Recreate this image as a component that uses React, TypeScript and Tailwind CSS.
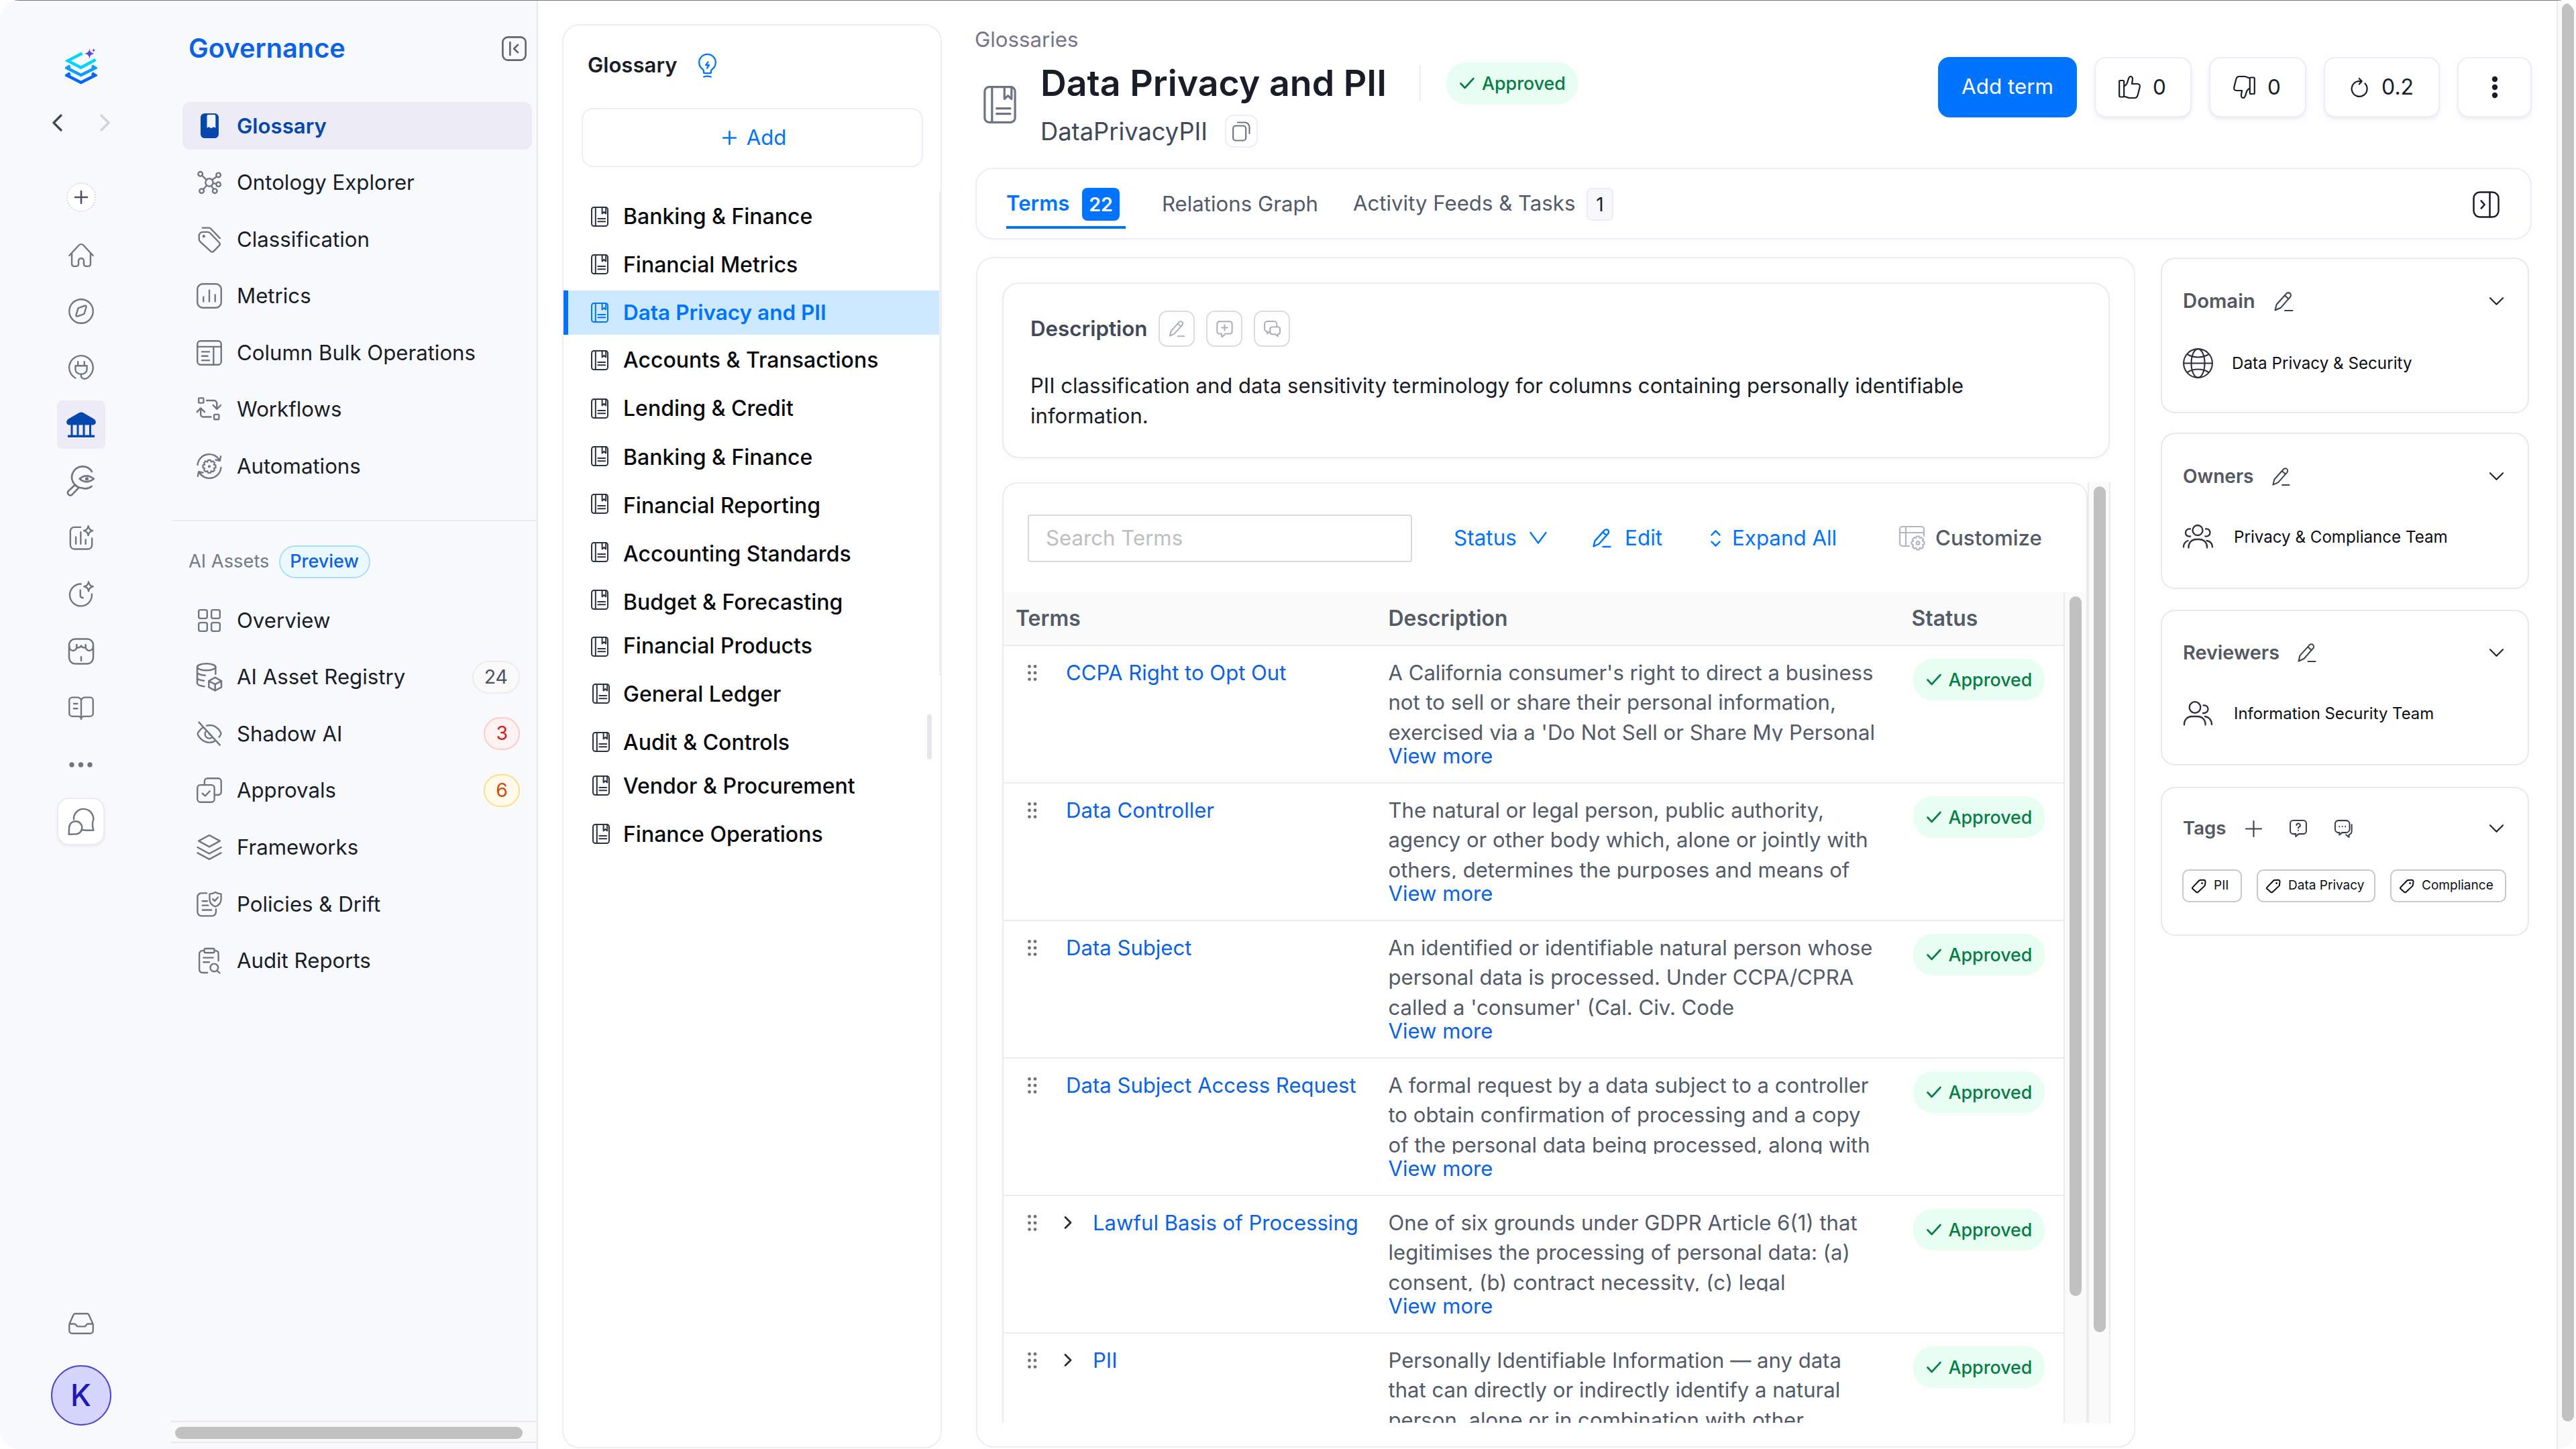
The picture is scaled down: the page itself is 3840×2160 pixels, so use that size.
import React from "react";

type IconProps = { className?: string; sw?: number; box?: string; children: React.ReactNode };

const Svg = ({ className = "size-[38px]", sw = 1.5, box = "0 0 24 24", children }: IconProps) => (
  <svg
    className={`shrink-0 overflow-visible ${className}`}
    viewBox={box}
    fill="none"
    stroke="currentColor"
    strokeWidth={sw}
    strokeLinecap="round"
    strokeLinejoin="round"
  >
    {children}
  </svg>
);

const Logo = () => (
  <svg className="h-[54px] w-[48px] shrink-0" viewBox="0 0 48 54" fill="none">
    <path d="M25.5 7.5L4 18.6L23.7 28.8L45.5 17" stroke="#00d5ff" strokeWidth="4.4" />
    <path d="M7.5 26.3L2.6 29.3L23.7 40L45 29.3L40 26.3" stroke="#0a9dff" strokeWidth="4.6" />
    <path d="M7.5 37.3L2.6 40.3L23.7 51L45 40.3L40 37.3" stroke="#0068ff" strokeWidth="4.6" />
    <path d="M36.4 .6C37.4 5.4 38.6 6.8 43.4 7.9C38.6 9 37.4 10.4 36.4 15.2C35.4 10.4 34.2 9 29.4 7.9C34.2 6.8 35.4 5.4 36.4 .6Z" fill="#5b47e0" />
    <path d="M42.6 0C43 2 43.6 2.6 45.6 3C43.6 3.4 43 4 42.6 6C42.2 4 41.6 3.4 39.6 3C41.6 2.6 42.2 2 42.6 0Z" fill="#8b3df0" />
  </svg>
);

const Book = ({ className = "h-[30px] w-[26px]", sw = 2 }: { className?: string; sw?: number }) => (
  <Svg className={className} sw={sw} box="0 0 26 30">
    <rect x="1" y="1" width="24" height="28" rx="3.5" />
    <path d="M6.8 1v28M16.6 1v9.5l2.8-2.6l2.8 2.6V1M10.4 18h10.8M10.4 22.2h10.8" />
  </Svg>
);

const Pencil = ({ className = "size-[28px]", sw = 2 }: { className?: string; sw?: number }) => (
  <Svg className={className} sw={sw} box="0 0 28 28">
    <path d="M1.5 26.5L3.4 18.4L17.6 2.6a3.4 3.4 0 0 1 5.6 4.8L9.4 23Z M15.4 5.4l5.2 4.7M15.5 27h11" />
  </Svg>
);

const Check = () => (
  <Svg className="h-[18px] w-[22px]" sw={2.6} box="0 0 22 18">
    <path d="M1.5 9.5L7.6 16L20.5 2" />
  </Svg>
);

const Chevron = ({ className = "h-[12px] w-[22px]" }: { className?: string }) => (
  <Svg className={className} sw={2.2} box="0 0 22 12">
    <path d="M1 1L11 11L21 1" />
  </Svg>
);

const Dots = ({ className = "h-[24px] w-[14px]" }: { className?: string }) => (
  <svg className={`shrink-0 ${className}`} viewBox="0 0 14 24" fill="currentColor">
    {[2.4, 12, 21.6].map((y) => (
      <g key={y}>
        <circle cx="2.5" cy={y} r="2.4" />
        <circle cx="11" cy={y} r="2.4" />
      </g>
    ))}
  </svg>
);

const Tag = ({ className = "size-[22px]" }: { className?: string }) => (
  <Svg className={className} sw={2} box="0 0 22 22">
    <path d="M1.6 12.6L10.8 3a3 3 0 0 1 2-.9L18 1.8a2.4 2.4 0 0 1 2.5 2.6L20 9a3 3 0 0 1-.9 1.9L9.6 19.8a1.8 1.8 0 0 1-2.6 0L1.6 15a1.7 1.7 0 0 1 0-2.4Z" />
    <circle cx="15.6" cy="6.6" r="1" fill="currentColor" strokeWidth="1" />
  </Svg>
);

/* ---------- navigation rail ---------- */

const RAIL: React.ReactNode[] = [
  <Svg key="home" className="mt-[3px] size-[38px]">
    <path d="M.8 12L9.9 2.2a3 3 0 0 1 4.2 0L23.2 12M3.2 9.8V20a2 2 0 0 0 2 2h2.3a2 2 0 0 0 2-2v-3a2.5 2.5 0 0 1 5 0v3a2 2 0 0 0 2 2h2.3a2 2 0 0 0 2-2V9.8" />
  </Svg>,
  <Svg key="compass">
    <circle cx="12" cy="12" r="11.2" />
    <path d="M10.2 8.6l5.5-1.9a.9.9 0 0 1 1.1 1.1l-1.7 5.8a2 2 0 0 1-1.3 1.3l-5.5 1.9a.9.9 0 0 1-1.1-1.1l1.7-5.8a2 2 0 0 1 1.3-1.3Z" />
  </Svg>,
  <Svg key="plug">
    <path d="M6.6 21.8A11.2 11.2 0 1 1 20.9 18.7c-1.8 2.4-4 4.2-6.4 3.8c-2-.3-2.6-1.4-2.6-3.2v-1.2M6.6 10.3h10.8v3.2a4.6 4.6 0 0 1-4.6 4.6h-1.6a4.6 4.6 0 0 1-4.6-4.6ZM9 10.2V6.4M15 10.2V6.4" />
  </Svg>,
  <svg key="bank" className="h-[38px] w-[44px]" viewBox="0 0 44 38" fill="currentColor">
    <path d="M18.5 1.4a7 7 0 0 1 7 0L41 10.5c2.4 1.6 3.4 4.4 2.6 6.2S41 19.6 39 19.6H5c-2 0-3.800-.9-4.600-2.900S.6 12.100 3 10.500Z" />
    <path d="M6.5 19h3v17h-3zM15.5 19h3v17h-3zM24.5 19h3v17h-3zM34 19h3v17h-3zM2 34.6h40V38H2z" />
  </svg>,
  <Svg key="inspect" className="h-[43px] w-[43px]" sw={1.5}>
    <path d="M21.2 3.9A9 9 0 1 0 13 17.6q4.500 1.400 8-1.400M11 9.900Q16.500 5 22.800 9.900Q16.500 14.800 11 9.900ZM8.200 15.600l1.900 1.900l-5.400 5.600a1.900 1.900 0 0 1-2.800 0l-.3-.3a1.900 1.900 0 0 1 0-2.700l5.300-4.900" />
    <circle cx="17" cy="9.900" r=".7" fill="currentColor" />
  </Svg>,
  <Svg key="insight">
    <path d="M11.500 1.800H5.500A3.700 3.700 0 0 0 1.800 5.500v13.200a3.700 3.700 0 0 0 3.700 3.700h13a3.700 3.700 0 0 0 3.700-3.700v-6.500M7 11v6.600M11.600 6.500v11.100M16.200 13.600v4M18.700.7q.5 3.600 4.200 4.400q-3.700.8-4.200 4.400q-.5-3.600-4.200-4.400q3.700-.8 4.200-4.400Z" />
  </Svg>,
  <Svg key="clock">
    <path d="M11.800 2.200A10.400 10.400 0 1 0 22 11.600M11.200 8v5.600q.2 1.400 2.600 1.700M19 .2q.5 3.600 4.200 4.400q-3.700.8-4.200 4.400q-.5-3.600-4.200-4.400q3.700-.8 4.200-4.400Z" />
  </Svg>,
  <Svg key="store" className="size-[40px]">
    <rect x="1.200" y=".9" width="21.600" height="22.200" rx="5.500" />
    <path d="M1.400 7.500a3.300 3.300 0 0 0 6.600 1a3.800 3.800 0 0 0 4-1.500a3.800 3.800 0 0 0 4 1.500a3.300 3.300 0 0 0 6.600-1M8 6v2.500M16 6v2.500M12 17v3.200" />
  </Svg>,
  <Svg key="docs">
    <path d="M12 4.800a4 4 0 0 0-3.600-2.500H3.600A2.800 2.800 0 0 0 .8 5v12.300a2.800 2.800 0 0 0 2.800 2.800h5.500c1.600 0 2.900.8 2.900 2.600c0-1.800 1.300-2.600 2.900-2.600h5.500a2.800 2.800 0 0 0 2.800-2.800V5a2.800 2.800 0 0 0-2.800-2.700h-4.800A4 4 0 0 0 12 4.800Zm0 0v17.900M5 8.200h3.500M5 12.800h3.500" />
  </Svg>,
  <svg key="more" className="h-[8px] w-[35px]" viewBox="0 0 35 8" fill="currentColor">
    <circle cx="4" cy="4" r="3.700" />
    <circle cx="17.500" cy="4" r="3.700" />
    <circle cx="31" cy="4" r="3.700" />
  </svg>,
];

const Rail = () => (
  <div className="flex w-[241px] shrink-0 flex-col items-center pt-[72px] pb-[35px] text-[#6f7683]">
    <Logo />
    <div className="mt-[43px] flex h-[28px] w-[88px] items-center justify-between">
      <Svg className="h-[26px] w-[16px] text-[#3f4756]" sw={3.2} box="0 0 16 26"><path d="M14 2L3 13L14 24" /></Svg>
      <Svg className="h-[26px] w-[16px] text-[#d0d3da]" sw={3.2} box="0 0 16 26"><path d="M2 2L13 13L2 24" /></Svg>
    </div>
    <div className="mt-[75px] flex size-[44px] items-center justify-center rounded-full border-[2px] border-dotted border-[#d8dae0] bg-white">
      <Svg className="size-[20px] text-[#4a5160]" sw={2.600} box="0 0 20 20"><path d="M10 1v18M1 10h18" /></Svg>
    </div>
    <div className="mt-[21px] flex flex-col">
      {RAIL.map((icon, i) => (
        <div key={i} className="flex h-[84.5px] items-center justify-center">
          <div className={i === 3 ? "flex size-[72px] items-center justify-center rounded-[8px] bg-[#ecebf6] text-[#0448ad]" : "flex w-[72px] justify-center"}>
            {icon}
          </div>
        </div>
      ))}
      <div className="flex h-[84.5px] items-center justify-center">
        <div className="flex size-[71px] items-center justify-center rounded-[18px] border-[2px] border-[#ebebef] bg-white shadow-[0_2px_4px_rgba(16,24,40,0.06)]">
          <Svg className="size-[39px]">
            <path d="M5.500 10.200A9 9 0 1 1 22.800 13v3.600l.8 3.400l-4 .1q-3.300.300-7-.4" />
            <path d="M1.300 17.600a5.900 5.900 0 1 1 5.900 6L1 23.800Z" />
          </Svg>
        </div>
      </div>
    </div>
    <Svg className="mt-auto size-[38px]">
      <path d="M6.500 2.700h11a2 2 0 0 1 1.700 1l3.600 8a4 4 0 0 1 .4 1.700v5.200a2.700 2.700 0 0 1-2.700 2.700h-17a2.700 2.700 0 0 1-2.700-2.700v-5.200a4 4 0 0 1 .4-1.700l3.600-8a2 2 0 0 1 1.700-1ZM1 12.300h4.500a2 2 0 0 1 1.600.9l.5.700a2 2 0 0 0 1.600.9h5.600a2 2 0 0 0 1.600-.9l.5-.7a2 2 0 0 1 1.600-.9H23" />
    </Svg>
    <div className="mt-[43px] flex size-[90px] items-center justify-center rounded-full border-[2px] border-[#4a47d6] bg-[#d6d5fd] text-[45px] font-medium text-[#2019b8]">K</div>
  </div>
);

/* ---------- governance menu ---------- */

const GOV: [string, React.ReactNode][] = [
  ["Glossary",
    <svg key="i" className="h-[37px] w-[27px]" viewBox="0 0 27 37">
      <rect width="27" height="37" rx="6" fill="#0448ad" />
      <path d="M9.500 4a2 2 0 0 1 2-2h8.800a2 2 0 0 1 2 2v17.500l-3-1.200l-3.400 2l-3.400-2l-3 1.200Z" fill="#f3f3fb" />
    </svg>],
  ["Ontology Explorer",
    <Svg key="i" className="size-[38px]">
      <circle cx="12" cy="12" r="3.600" /><circle cx="3.600" cy="4" r="2.100" /><circle cx="20.600" cy="5" r="2.100" />
      <circle cx="20.600" cy="13.800" r="2.100" /><circle cx="17.200" cy="20" r="2.100" /><circle cx="4.800" cy="20" r="2.100" />
      <path d="M5.200 5.500l4.100 4M14.700 9.500l4.300-3M15.600 12.600l2.900.7M13.900 15.200l2.100 3M9.600 14.800l-3.400 3.700" />
    </Svg>],
  ["Classification",
    <Svg key="i" className="size-[38px]">
      <path d="M5.500 1h6a3 3 0 0 1 2 .9L22 10.800M2.300 8.500a3.500 3.500 0 0 1 3.500-3.500h4.500a3.500 3.500 0 0 1 2.500 1L21.400 15a1.900 1.900 0 0 1 0 2.600l-5.300 5.500a1.900 1.900 0 0 1-2.800 0L3.300 14a3 3 0 0 1-.9-2.100Z" />
      <circle cx="6.800" cy="9" r=".6" fill="currentColor" />
    </Svg>],
  ["Metrics",
    <Svg key="i" className="size-[38px]">
      <rect x=".8" y=".8" width="22.400" height="22.400" rx="5" /><path d="M6.500 13v4.300M12 6.800v10.500M17.500 11v6.300" />
    </Svg>],
  ["Column Bulk Operations",
    <Svg key="i" className="size-[38px]">
      <rect x=".8" y=".8" width="22.400" height="22.400" rx="3" /><path d="M.8 6.200h22.400M16 6.200v17M5 11h7M5 15h5.500M5 19h7" />
    </Svg>],
  ["Workflows",
    <Svg key="i" className="size-[38px]">
      <rect x="2" y="1.500" width="4.600" height="4.600" rx=".6" /><rect x="16.500" y="17" width="4.600" height="4.600" rx=".6" />
      <path d="M9.500 3.800h7a2.600 2.600 0 0 1 2.600 2.600v5M15.600 8.200l3.500 3.700l3.700-3.700M13.500 19.300h-7A2.600 2.600 0 0 1 3.900 16.700v-5M.4 14.600l3.500-3.600l3.700 3.600" />
    </Svg>],
  ["Automations",
    <Svg key="i" className="size-[38px]">
      <path d="M1 10.800A11 11 0 0 1 21.600 6.400M22.800 2.600l-.8 4.200l-4-.8M23 13.200A11 11 0 0 1 2.400 17.600M1.200 21.400L2 17.200l4 .8" />
      <path d="M10.800 6.200h2.400l.5 1.700l1.700-.7l1.600 1.600l-.7 1.700l1.700.5v2.400l-1.700.5l.7 1.700l-1.600 1.600l-1.700-.7l-.5 1.700h-2.400l-.5-1.700l-1.700.7L7 15.600l.7-1.700L6 13.400V11l1.700-.5L7 8.800l1.600-1.600l1.700.7Z" strokeWidth="1.400" />
      <circle cx="12" cy="12.200" r=".9" fill="currentColor" strokeWidth=".8" />
    </Svg>],
];

const AI: [string, React.ReactNode, string?, string?][] = [
  ["Overview",
    <Svg key="i" className="size-[38px]">
      <rect x="2" y="2" width="8" height="8" rx="1.600" /><rect x="14" y="2" width="8" height="8" rx="1.600" />
      <rect x="2" y="14" width="8" height="8" rx="1.600" /><rect x="14" y="14" width="8" height="8" rx="1.600" />
    </Svg>],
  ["AI Asset Registry",
    <Svg key="i" className="size-[40px]">
      <ellipse cx="9.400" cy="3.200" rx="8.200" ry="3" />
      <path d="M1.200 3.200v14.300c0 1.500 2.500 2.500 6.300 3M17.600 3.200v6.200M1.200 8c0 1.400 3 2.400 7 2.600M1.200 12.800c0 1.400 2.500 2.300 6 2.600M17.200 12.500l5.600 3.100v5.600l-5.600 3.100l-5.600-3.100v-5.600ZM11.600 15.600l5.600 3.100l5.600-3.100M17.200 18.700v5.600" />
    </Svg>, "24", "border-[#ececec] bg-[#fafafa] text-[#4b5160]"],
  ["Shadow AI",
    <Svg key="i" className="size-[38px]">
      <path d="M2.200 1l19.800 21.500M9.600 4.200C15.500 2.800 20 6 22.600 10.300a2.600 2.600 0 0 1 0 2.700l-1.400 2M5.500 6.200A19 19 0 0 0 1.300 11a2 2 0 0 0 0 2C4.500 18.600 10.500 22 16.800 19M9 9.500a4 4 0 0 0 5.600 5.700M12 11.200a1.300 1.300 0 0 0 1.600 1.700" />
    </Svg>, "3", "border-[#fecaca] bg-[#fef3f2] text-[#d71920]"],
  ["Approvals",
    <Svg key="i" className="size-[38px]">
      <path d="M7.500 7V3.600A2.800 2.800 0 0 1 10.300.8h10A2.800 2.800 0 0 1 23.200 3.600v10a2.800 2.800 0 0 1-2.800 2.800h-3.200" />
      <rect x=".8" y="7" width="16" height="16.200" rx="2.800" /><path d="M5.500 15l2.700 2.400l4.300-4.600" />
    </Svg>, "6", "border-[#fddf82] bg-[#fffaea] text-[#cf4a0c]"],
  ["Frameworks",
    <Svg key="i" className="size-[38px]">
      <path d="M12 .6l10 5.500l-10 5.500l-10-5.500ZM.9 12l11.100 6l11.100-6M.9 17.300l11.100 6l11.100-6" />
    </Svg>],
  ["Policies & Drift",
    <Svg key="i" className="size-[38px]">
      <path d="M9.500 1.500h-5A3.700 3.700 0 0 0 .9 5.200v14.100A3.700 3.700 0 0 0 4.600 23h10a3.700 3.700 0 0 0 3.700-3.700v-2.800M5.500 9h4.500M5.500 13h5.500M5.500 17.400h8.500M17.700.6q2.500 1.600 5.400 1.700v4.900q0 4.800-5.400 7q-5.400-2.200-5.400-7V2.300q2.900-.1 5.400-1.700ZM15.300 7l1.800 1.900l3.100-3.500" />
    </Svg>],
  ["Audit Reports",
    <Svg key="i" className="size-[38px]">
      <path d="M7 2.600H5.600a3 3 0 0 0-3 3v14.800a3 3 0 0 0 3 3h4.600M17 2.600h1a3 3 0 0 1 2.600 3v6.500M8.300.6h7.400a1 1 0 0 1 1 1v2a1 1 0 0 1-1 1H8.300a1 1 0 0 1-1-1v-2a1 1 0 0 1 1-1ZM6.500 9.200h9M6.500 13.400h5.500M19.400 21.600l2.400 2" />
      <circle cx="16.600" cy="18.600" r="3.700" />
    </Svg>],
];

const NavItem = ({ label, icon, active, count, tone }: { label: string; icon: React.ReactNode; active?: boolean; count?: string; tone?: string }) => (
  <div className={`flex h-[71px] items-center rounded-[12px] pr-[18px] pl-[20px] ${active ? "bg-[#ecebf6]" : ""}`}>
    <div className="flex w-[40px] shrink-0 justify-center text-[#6f7683]">{icon}</div>
    <div className={`ml-[21px] flex-1 text-[31.200px] leading-[44px] ${active ? "font-semibold text-[#0448ad]" : "text-[#181d27]"}`}>{label}</div>
    {count && (
      <div className={`flex h-[49px] min-w-[53px] items-center justify-center rounded-full border-[2px] px-[16px] text-[28.500px] ${tone}`}>{count}</div>
    )}
  </div>
);

const Menu = () => (
  <div className="ml-[14px] flex w-[545px] flex-col">
    <div className="mt-[50px] flex h-[44px] items-center justify-between pr-[15px] pl-[26px]">
      <div className="text-[39.800px] leading-[44px] font-semibold text-[#0a62e6]">Governance</div>
      <Svg className="size-[37px] text-[#5d6472]" sw={1.700}>
        <rect x=".9" y=".9" width="22.200" height="22.200" rx="5" /><path d="M8 5.800v12.400M15.600 8.300L11.800 12l3.800 3.700" />
      </Svg>
    </div>
    <div className="mt-[58px] ml-[17px] flex w-[521px] flex-col gap-[13.600px]">
      {GOV.map(([label, icon], i) => <NavItem key={label} label={label} icon={icon} active={i === 0} />)}
    </div>
    <div className="mt-[44.500px] h-[2px] bg-[#ececef]" />
    <div className="mt-[36px] flex h-[49px] items-center pl-[26px]">
      <div className="w-[134.500px] text-[27.300px] text-[#737a87]">AI Assets</div>
      <div className="flex h-[49px] w-[136px] items-center justify-center rounded-full border-[2px] border-[#a9ddfb] bg-[#ecf8ff] text-[27px] font-medium text-[#0a62e6]">Preview</div>
    </div>
    <div className="mt-[27px] ml-[17px] flex w-[521px] flex-col gap-[13.600px]">
      {AI.map(([label, icon, count, tone]) => <NavItem key={label} label={label} icon={icon} count={count} tone={tone} />)}
    </div>
    <div className="mt-auto mb-[9px] h-[33px] border-y-[2px] border-[#e9e9ec] bg-[#fafafa] pt-[7px] pl-[6px]">
      <div className="h-[18px] w-[518px] rounded-full bg-[#c1c1c1]" />
    </div>
  </div>
);

/* ---------- glossary list ---------- */

const LIST: [string, string, string][] = [
  ["Banking & Finance", "", ""],
  ["Financial Metrics", "mt-[6px]", "-translate-y-[1px]"],
  ["Data Privacy and PII", "mt-[5px]", ""],
  ["Accounts & Transactions", "mt-[5px]", ""],
  ["Lending & Credit", "mt-[6px]", ""],
  ["Banking & Finance", "mt-[6.500px]", "-translate-y-[2px]"],
  ["Financial Reporting", "mt-[6px]", "-translate-y-[3px]"],
  ["Accounting Standards", "mt-[6.500px]", "-translate-y-[3px]"],
  ["Budget & Forecasting", "mt-[6px]", "-translate-y-[4px]"],
  ["Financial Products", "-mt-[1px]", "translate-y-[1px]"],
];
const LIST_END: [string, string, string][] = [
  ["General Ledger", "mt-[6px]", "translate-x-[2px] -translate-y-[1px]"],
  ["Audit & Controls", "mt-[6px]", "translate-x-[2px] -translate-y-[1px]"],
  ["Vendor & Procurement", "-mt-[1px]", "translate-x-[2px] -translate-y-[1px]"],
  ["Finance Operations", "mt-[6px]", "translate-x-[2px] -translate-y-[1px]"],
];

const ListRow = ({ label, gap, shift, active }: { label: string; gap: string; shift: string; active?: boolean }) => (
  <div className={`flex h-[66px] shrink-0 items-center ${gap} ${active ? "border-l-[7px] border-[#0074ff] bg-[#cce9ff] pl-[34px] font-semibold text-[#0074ff]" : "pl-[41px] font-medium text-[#08090c]"}`}>
    <div className={`${shift} ${active ? "" : "text-[#2b3240]"}`}><Book /></div>
    <div className={`ml-[22px] leading-[44px] ${active ? "text-[31.500px]" : "text-[32px]"}`}>{label}</div>
  </div>
);

const GlossaryPanel = () => (
  <div className="relative mt-[36px] ml-[36px] flex h-[2123px] w-[566px] shrink-0 flex-col rounded-[26px] border-[2px] border-[#eeeef0] bg-white">
    <div className="mt-[37px] flex h-[44px] items-center pl-[36px]">
      <div className="w-[165px] text-[31.100px] font-semibold text-[#181d27]">Glossary</div>
      <Svg className="mt-[6px] h-[32px] w-[27px] text-[#0074ff]" sw={2.300} box="0 0 27 32">
        <path d="M8 24v-2.200c0-1-.5-1.700-1.500-2.500A12.300 12.300 0 1 1 20.500 19.300c-1 .8-1.500 1.500-1.500 2.500V24a1.200 1.200 0 0 1-1.200 1.200H9.200A1.200 1.200 0 0 1 8 24ZM8.200 30.500q5.300-1.600 10.600 0M14.500 8.500l-3.400 4.700h4.900l-3 4.300" />
      </Svg>
    </div>
    <div className="mt-[42px] ml-[27px] flex h-[88px] w-[509px] items-center justify-center rounded-[17px] border-[2px] border-[#edecf8] pl-[6px] text-[#0074ff]">
      <Svg className="size-[21px]" sw={2.700} box="0 0 21 21"><path d="M10.500 1.200v18.600M1.200 10.500h18.600" /></Svg>
      <div className="ml-[15px] text-[31.200px]">Add</div>
    </div>
    <div className="mt-[36px] flex h-[722px] w-[562px] flex-col border-r-[2px] border-[#eeeef0] pt-[5px]">
      {LIST.map(([label, gap, shift], i) => <ListRow key={i} label={label} gap={gap} shift={shift} active={i === 2} />)}
    </div>
    <div className="-mt-[11px] flex flex-col">
      {LIST_END.map(([label, gap, shift]) => <ListRow key={label} label={label} gap={gap} shift={shift} />)}
    </div>
    <div className="absolute top-[1027px] right-[13px] h-[67px] w-[7px] rounded-full bg-[#e6e6ee]" />
  </div>
);

/* ---------- header ---------- */

const Badge = () => (
  <div className="flex h-[62px] w-[196px] shrink-0 items-center rounded-[29px] bg-[#e9fef2] pl-[20px] text-[#067d45]">
    <Check />
    <div className="ml-[11px] text-[26.800px] leading-[40px] font-medium">Approved</div>
  </div>
);

const HeadButton = ({ className, children }: { className: string; children: React.ReactNode }) => (
  <div className={`flex h-[90px] items-center rounded-[17px] border-[2px] border-[#edecf8] bg-white text-[#181d27] shadow-[0_3px_5px_rgba(16,24,40,0.07)] ${className}`}>{children}</div>
);

const ThumbUp = ({ className = "" }: { className?: string }) => (
  <Svg className={`h-[34px] w-[33px] ${className}`} sw={2.200} box="0 0 33 34">
    <path d="M1.200 8.500a1.500 1.500 0 0 1 1.500-1.500h4A1.500 1.500 0 0 1 8.200 8.500v21.500a1.500 1.500 0 0 1-1.500 1.500h-4A1.500 1.500 0 0 1 1.200 30ZM8.200 15.500c4-1.500 5-5 6.500-10.500c.7-2.500 1.500-4 3.300-4c2.600 0 3.400 2.500 2.900 5.500l-1 5.500h8.500c2.500 0 4 2 3.400 4.500l-3 12c-.8 3-2 4.500-4.800 4.500h-7.500c-3 0-5-1.800-8.300-2.500" />
  </Svg>
);

const Header = () => (
  <div className="flex h-[169px] items-start">
    <Book className="mt-[45px] ml-[12px] h-[60px] w-[49px] text-[#6c7482]" sw={1.700} />
    <div className="ml-[36px] flex flex-col">
      <div className="mt-[10px] flex h-[66px] items-center">
        <div className="w-[565px] text-[53.700px] leading-[66px] font-semibold whitespace-nowrap text-[#181d27]">Data Privacy and PII</div>
        <div className="mr-[38px] h-[54px] w-[2px] bg-[#ededf5]" />
        <Badge />
      </div>
      <div className="mt-[14px] flex h-[49px] items-center">
        <div className="w-[275px] text-[36.300px] leading-[48px] text-[#414856]">DataPrivacyPII</div>
        <div className="flex size-[49px] items-center justify-center rounded-[13px] border-[2px] border-[#edecf8] text-[#6f7683]">
          <Svg className="h-[30px] w-[27px]" sw={2.200} box="0 0 27 30">
            <rect x="1.200" y="6.500" width="19" height="22" rx="4" /><path d="M8 1.500h10.500a7 7 0 0 1 7 7V18" />
          </Svg>
        </div>
      </div>
    </div>
    <div className="mt-[4px] ml-auto flex gap-[26px]">
      <div className="flex h-[90px] w-[207px] items-center justify-center rounded-[17px] bg-[#0074ff] text-[31.400px] text-white">Add term</div>
      <HeadButton className="w-[145px] pl-[34px]"><ThumbUp /><div className="ml-[18px] text-[31.500px]">0</div></HeadButton>
      <HeadButton className="w-[145px] pl-[34px]"><ThumbUp className="rotate-180" /><div className="ml-[18px] text-[31.500px]">0</div></HeadButton>
      <HeadButton className="w-[173px] pl-[38px]">
        <Svg className="mr-[20px] h-[29px] w-[26px]" sw={2.200} box="0 0 26 29">
          <path d="M21.500 8.500A11.500 11.500 0 1 1 10.500 5.200h5.500M12.800 1l3.900 4.200l-3.900 4.200" />
        </Svg>
        <div className="text-[32px]">0.2</div>
      </HeadButton>
      <HeadButton className="w-[111px] justify-center">
        <svg className="h-[34px] w-[10px]" viewBox="0 0 10 34" fill="currentColor"><circle cx="5" cy="5" r="4.200" /><circle cx="5" cy="17" r="4.200" /><circle cx="5" cy="29" r="4.200" /></svg>
      </HeadButton>
    </div>
  </div>
);

const Tabs = () => (
  <div className="flex h-[107px] shrink-0 items-start rounded-[26px] border-[2px] border-[#edecf8] pt-[28px] pr-[46px] pl-[44px] text-[31.200px] leading-[46px] text-[#535a68]">
    <div className="flex w-[178px] flex-col">
      <div className="flex">
        <div className="w-[113px] font-semibold text-[#0074ff]">Terms</div>
        <div className="flex h-[49px] w-[56px] items-center justify-center rounded-[8px] bg-[#0074ff] text-[28.700px] font-semibold text-white">22</div>
      </div>
      <div className="mt-[8px] h-[4px] bg-[#0074ff]" />
    </div>
    <div className="ml-[54px] w-[285px] pt-[1px]">Relations Graph</div>
    <div className="w-[348px]">Activity Feeds &amp; Tasks</div>
    <div className="flex h-[49px] w-[40px] items-center justify-center rounded-[8px] border-[2px] border-[#edecf8] bg-[#f8f8fa] text-[28px] text-[#181d27]">1</div>
    <Svg className="mt-[5px] ml-auto size-[40px] text-[#181d27]" sw={1.500}>
      <rect x=".9" y=".9" width="22.200" height="22.200" rx="5.500" /><path d="M15.300 1v22M7.600 8.600L10.600 12l-3 3.400" />
    </Svg>
  </div>
);

/* ---------- terms table ---------- */

const ROWS: { term: string; nested?: boolean; lines: string[] }[] = [
  { term: "CCPA Right to Opt Out", lines: ["A California consumer's right to direct a business", "not to sell or share their personal information,", "exercised via a 'Do Not Sell or Share My Personal"] },
  { term: "Data Controller", lines: ["The natural or legal person, public authority,", "agency or other body which, alone or jointly with", "others, determines the purposes and means of"] },
  { term: "Data Subject", lines: ["An identified or identifiable natural person whose", "personal data is processed. Under CCPA/CPRA", "called a 'consumer' (Cal. Civ. Code"] },
  { term: "Data Subject Access Request", lines: ["A formal request by a data subject to a controller", "to obtain confirmation of processing and a copy", "of the personal data being processed, along with"] },
  { term: "Lawful Basis of Processing", nested: true, lines: ["One of six grounds under GDPR Article 6(1) that", "legitimises the processing of personal data: (a)", "consent, (b) contract necessity, (c) legal"] },
  { term: "PII", nested: true, lines: ["Personally Identifiable Information — any data", "that can directly or indirectly identify a natural", "person, alone or in combination with other"] },
];

const SquareButton = ({ children }: { children: React.ReactNode }) => (
  <div className="flex size-[54px] items-center justify-center rounded-[13px] border-[2px] border-[#dcdce0] text-[#a9adb6]">{children}</div>
);

const DescriptionCard = () => (
  <div className="h-[262px] w-[1651px] shrink-0 rounded-[25px] border-[2px] border-[#ececee] pt-[40px] pl-[40px] shadow-[0_2px_4px_rgba(16,24,40,0.04)]">
    <div className="flex h-[54px] items-center gap-[17px]">
      <div className="w-[174px] text-[31.300px] font-semibold text-[#414856]">Description</div>
      <SquareButton><Pencil className="h-[24px] w-[25px]" sw={2.200} /></SquareButton>
      <SquareButton>
        <Svg className="size-[25px]" sw={1.900}><path d="M4.500 1.200h15a3.200 3.200 0 0 1 3.200 3.200v11.200a3.200 3.200 0 0 1-3.200 3.200h-6.200L9 22.800c-.6.500-1.300.1-1.300-.6v-3.400H4.500a3.200 3.200 0 0 1-3.200-3.200V4.400a3.200 3.200 0 0 1 3.200-3.200ZM12 6v8M8 10h8" /></Svg>
      </SquareButton>
      <SquareButton>
        <Svg className="size-[25px]" sw={1.900}><path d="M8.500 15.500L5 18.600v-3A4 4 0 0 1 1 11.600V5a4 4 0 0 1 4-4h9.500a4 4 0 0 1 4 4v3.500M12 9h8a3 3 0 0 1 3 3v4.500a3 3 0 0 1-3 3v2.800l-3.800-2.800H12a3 3 0 0 1-3-3V12a3 3 0 0 1 3-3Z" /></Svg>
      </SquareButton>
    </div>
    <div className="mt-[36px] text-[31.100px] leading-[44.500px] whitespace-nowrap text-[#181d27]">
      <div>PII classification and data sensitivity terminology for columns containing personally identifiable</div>
      <div>information.</div>
    </div>
  </div>
);

const Toolbar = () => (
  <div className="flex h-[162px] shrink-0 items-center text-[31.500px] text-[#0074ff]">
    <div className="ml-[36px] flex h-[71px] w-[573px] items-center rounded-[4px] border-[2px] border-[#d9d9d9] pl-[25px] text-[31.200px] text-[#bfbfbf]">Search Terms</div>
    <div className="ml-[62px] w-[113px]">Status</div>
    <Svg className="h-[18px] w-[26px]" sw={2.400} box="0 0 26 18"><path d="M1.500 1L13 16.500L24.500 1" /></Svg>
    <Pencil className="ml-[68px] h-[28px] w-[28px]" sw={2.400} />
    <div className="ml-[20px] w-[128px]">Edit</div>
    <Svg className="h-[25px] w-[15px]" sw={2.500} box="0 0 15 25"><path d="M1.500 7.500L7.500 1.300L13.500 7.500M1.500 17.500L7.500 23.700L13.500 17.500" /></Svg>
    <div className="ml-[17px] w-[249px] text-[31.300px]">Expand All</div>
    <Svg className="h-[36px] w-[39px] text-[#b3b7c0]" sw={2.200} box="0 0 39 36">
      <path d="M15 30H5a4 4 0 0 1-4-4V5a4 4 0 0 1 4-4h28a4 4 0 0 1 4 4v10M1 10h36M10 1v29" />
      <path d="M26 15.500h4l.8 2.800l2.700-1.200l2.600 3l-1.300 2.400l2.700 1.200v3.400l-2.700 1.200l1.300 2.400l-2.600 3l-2.700-1.200l-.8 2.800h-4l-.8-2.800l-2.700 1.200l-2.600-3l1.300-2.400l-2.700-1.200v-3.400l2.700-1.200l-1.300-2.400l2.600-3l2.700 1.200Z" />
      <circle cx="28" cy="25.500" r="2.400" />
    </Svg>
    <div className="ml-[15px] text-[31.300px] font-medium text-[#535a68]">Customize</div>
  </div>
);

const Table = () => (
  <div className="flex min-h-0 flex-1">
    <div className="flex w-[1582px] flex-col overflow-hidden">
      <div className="flex h-[80px] shrink-0 items-center border-b-[2px] border-[#ececee] bg-[#fafafa] text-[31.950px] font-semibold text-[#535a68]">
        <div className="w-[573.500px] pl-[18px]">Terms</div>
        <div className="w-[780px]">Description</div>
        <div>Status</div>
      </div>
      {ROWS.map(({ term, nested, lines }) => (
        <div key={term} className="flex h-[205px] shrink-0 items-start border-b-[2px] border-[#ececee] pt-[17.500px] text-[31.100px] leading-[44.500px]">
          <div className="flex w-[573.500px] items-center pl-[36px]">
            <Dots className="h-[24px] w-[14px] text-[#717171]" />
            {nested && <Svg className="ml-[40px] h-[19px] w-[12px] text-[#2c2c2c]" sw={2.800} box="0 0 12 19"><path d="M2 1.500L10 9.500L2 17.500" /></Svg>}
            <div className={`whitespace-nowrap text-[#0a62e6] ${nested ? "ml-[31px]" : "ml-[43px]"}`}>{term}</div>
          </div>
          <div className="w-[782px]">
            <div className="h-[124px] overflow-hidden whitespace-nowrap text-[#535a68]">
              {lines.map((l) => <div key={l}>{l}</div>)}
            </div>
            <div className="text-[#0a62e6]">View more</div>
          </div>
          <div className="pt-[1.500px]"><Badge /></div>
        </div>
      ))}
    </div>
    <div className="w-[34px] border-l-[2px] border-[#ececee] bg-[#fafafa] pt-[6px] pl-[7px]">
      <div className="h-[1043px] w-[18px] rounded-full bg-[#c1c1c1]" />
    </div>
  </div>
);

const TermsPanel = () => (
  <div className="ml-[1px] flex h-[1775px] w-[1728px] shrink-0 flex-col rounded-[26px] border-[2px] border-[#edecf8] pt-[36px] pl-[37px]">
    <DescriptionCard />
    <div className="mt-[36px] flex h-[1402px] w-[1652px]">
      <div className="flex w-[1618px] flex-col overflow-hidden rounded-t-[22px] border-[2px] border-b-0 border-[#ececee]">
        <Toolbar />
        <Table />
      </div>
      <div className="w-[34px] border-x-[2px] border-[#ececee] bg-[#fafafa] pt-[6px] pl-[7px]">
        <div className="h-[1261px] w-[18px] rounded-full bg-[#c1c1c1]" />
      </div>
    </div>
  </div>
);

/* ---------- details column ---------- */

const SideCard = ({ title, className, icons, children }: { title: React.ReactNode; className: string; icons: React.ReactNode; children: React.ReactNode }) => (
  <div className={`flex w-[549px] flex-col rounded-[21px] border-[2px] border-[#e8e8e8] bg-[#fefefe] pr-[36px] pl-[31px] ${className}`}>
    <div className="flex h-[40px] shrink-0 items-center text-[#3c4048]">
      <div className="font-semibold text-[#535861]">{title}</div>
      {icons}
      <Chevron className="ml-auto h-[12px] w-[21px] text-[#222]" />
    </div>
    {children}
  </div>
);

const Chip = ({ className, label }: { className: string; label: string }) => (
  <div className={`flex h-[49px] items-center rounded-[10px] border-[2px] border-[#c8c8c8] bg-white pl-[12px] text-[19.050px] text-[#0c0e14] ${className}`}>
    <Tag />
    <div className="ml-[11px] whitespace-nowrap">{label}</div>
  </div>
);

const Details = () => (
  <div className="ml-[38px] flex flex-col pt-[1px]">
    <SideCard className="h-[232px] pt-[43px]" title={<div className="text-[29.300px]">Domain</div>} icons={<Pencil className="ml-[28px] size-[29px]" />}>
      <div className="mt-[49px] flex h-[46px] items-center text-[#0c0e14]">
        <Svg className="size-[45px] text-[#2c2f36]" sw={2.100} box="0 0 45 45">
          <circle cx="22.500" cy="22.500" r="21.400" /><ellipse cx="22.500" cy="22.500" rx="10" ry="21.400" />
          <path d="M1.100 22.500h42.800M6.500 9q7 4.500 16 4.500T38.500 9M6.500 36q7-4.500 16-4.500T38.500 36" />
        </Svg>
        <div className="mt-[2px] ml-[28px] text-[24.200px]">Data Privacy &amp; Security</div>
      </div>
    </SideCard>
    <SideCard className="mt-[29px] h-[233px] pt-[43px]" title={<div className="text-[28.100px]">Owners</div>} icons={<Pencil className="ml-[27px] size-[27px]" />}>
      <div className="mt-[47px] flex h-[46px] items-center text-[#0c0e14]">
        <Svg className="h-[36px] w-[45px] text-[#2c2f36]" sw={2.300} box="0 0 45 36">
          <circle cx="22" cy="8.500" r="7.500" />
          <path d="M8.500 34.500V33c0-6 5-11 11-11h5.500c6 0 11 5 11 11v1.500M11 6.500c-5-.5-7.500 3-7 6.500s3.500 5 7 4.500M34 6.500c4.500-.5 6.500 2.500 6.500 5.500s-2.500 6-7 5.500M1 33.500c0-4.500 2.500-8 6.500-9.500M44 33.500c0-5-3-8.500-8.500-9.500" />
        </Svg>
        <div className="mt-[2px] ml-[31px] text-[24.150px]">Privacy &amp; Compliance Team</div>
      </div>
    </SideCard>
    <SideCard className="mt-[31px] h-[232px] pt-[42px]" title={<div className="text-[28.800px]">Reviewers</div>} icons={<Pencil className="ml-[27px] size-[28px]" />}>
      <div className="mt-[47px] flex h-[46px] items-center text-[#0c0e14]">
        <Svg className="h-[37px] w-[45px] text-[#2c2f36]" sw={2.300} box="0 0 45 37">
          <circle cx="18" cy="9.500" r="8.300" />
          <path d="M2 35.500V34c0-6 5-11 11-11h9.500c6 0 11 5 11 11v1.500M30.500 6.500c4.500-.5 7 2.500 7 5.500s-2.500 6.500-7.500 6M33 23c5 .5 10 5 10 12" />
        </Svg>
        <div className="mt-[1px] ml-[31px] text-[23.900px]">Information Security Team</div>
      </div>
    </SideCard>
    <SideCard className="mt-[32px] h-[222px] pt-[40px]" title={<div className="text-[27.600px]">Tags</div>} icons={
      <>
        <Svg className="ml-[29px] size-[25px]" sw={2.100} box="0 0 25 25"><path d="M12.500 1v23M1 12.500h23" /></Svg>
        <Svg className="ml-[41px] size-[26px]" sw={1.900}><path d="M5 1h14a4 4 0 0 1 4 4v10.500a4 4 0 0 1-4 4h-6.500l-4 3.500v-3.500H5a4 4 0 0 1-4-4V5a4 4 0 0 1 4-4ZM9.600 7.600a2.500 2.500 0 1 1 3.500 2.300c-.8.300-1.100.8-1.100 1.700M12 14.600v.2" /></Svg>
        <Svg className="ml-[41px] size-[27px]" sw={1.800}><path d="M5 1h10.500a4.500 4.500 0 0 1 4.500 4.500v7a4.500 4.500 0 0 1-4.500 4.500H10l-3.500 3v-3H5A4.500 4.500 0 0 1 .8 12.500v-7A4.500 4.500 0 0 1 5 1ZM22.800 6.500v8.500a5 5 0 0 1-3.600 4.700v3.300l-4-3M6.500 9v.1M10.400 9v.1M14.300 9v.1" /></Svg>
      </>
    }>
      <div className="-mr-[10px] mt-[41px] -ml-[1px] flex">
        <Chip className="w-[89px]" label="PII" />
        <Chip className="ml-[22px] w-[177px]" label="Data Privacy" />
        <Chip className="ml-[22px] w-[173px]" label="Compliance" />
      </div>
    </SideCard>
  </div>
);

export default function App() {
  return (
    <div className="relative flex h-[2160px] w-[3840px] overflow-hidden rounded-[28px] bg-[#fefefe] font-[Inter,sans-serif]">
      <div className="flex h-full w-[802px] shrink-0 border-r-[2px] border-[#e6e7ec] bg-[#f8f9fd]">
        <Rail />
        <Menu />
      </div>
      <GlossaryPanel />
      <div className="ml-[50px] flex w-[2320px] shrink-0 flex-col pt-[37px]">
        <div className="-ml-[1px] h-[44px] text-[31.200px] leading-[44px] text-[#75758a]">Glossaries</div>
        <Header />
        <Tabs />
        <div className="mt-[26px] flex items-start">
          <TermsPanel />
          <Details />
        </div>
      </div>
      <div className="ml-[37px] w-[29px] shrink-0 border-l-[2px] border-[#ececec] bg-[#fafafa] pt-[5px] pl-[6px]">
        <div className="h-[2114px] w-[18px] rounded-full bg-[#c1c1c1]" />
      </div>
      <div className="absolute inset-x-[20px] top-0 h-px bg-[#777]" />
    </div>
  );
}
